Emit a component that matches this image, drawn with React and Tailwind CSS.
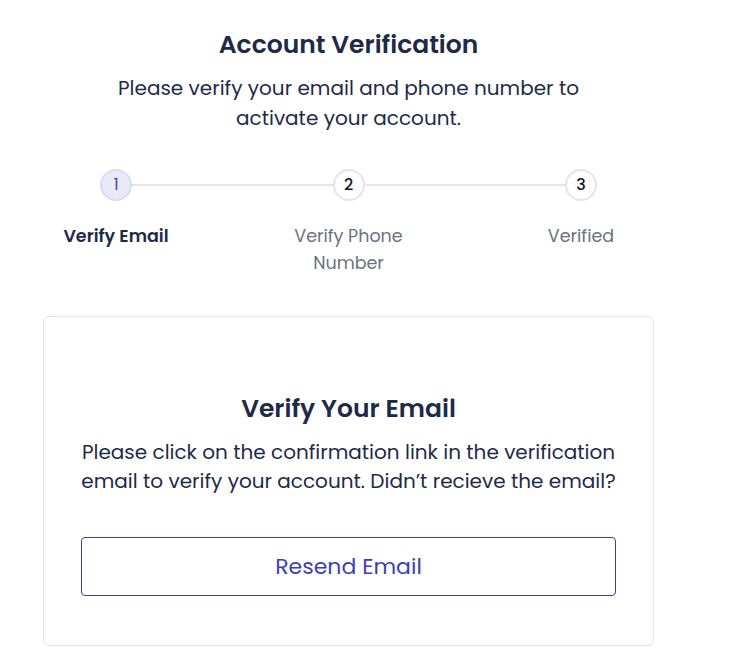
import React from 'react';

const steps = [
    { n: '1', label: 'Verify Email', active: true },
    { n: '2', label: 'Verify Phone Number' },
    { n: '3', label: 'Verified' },
];

const StepCircle = ({ step }) => (
    <div
        className={
            step.active
                ? 'w-8 h-8 rounded-full border-2 border-[#d9dcf2] bg-[#e9eaf8] flex items-center justify-center text-[16px] text-[#3f45b5]'
                : 'w-8 h-8 rounded-full border-2 border-[#e3e5ea] bg-white flex items-center justify-center text-[16px] font-medium text-[#111827]'
        }
    >
        {step.n}
    </div>
);

const App = () => {
    return (
        <div className="min-h-screen bg-white" style={{ fontFamily: '"Poppins", "Open Sans", sans-serif' }}>
            <div className="w-[611px] ml-[43px] pt-[29px] text-center">
                <h1 className="text-[25px] leading-[32px] font-semibold text-[#1e2a47]">Account Verification</h1>
                <p className="mt-[12px] text-[20px] leading-[30px] text-[#1e2a47] px-[50px]">
                    Please verify your email and phone number to activate your account.
                </p>

                {/* stepper */}
                <div className="mt-[36px] flex items-center px-[57px]">
                    <StepCircle step={steps[0]} />
                    <div className="flex-1 h-[2px] bg-[#e3e5ea]" />
                    <StepCircle step={steps[1]} />
                    <div className="flex-1 h-[2px] bg-[#e3e5ea]" />
                    <StepCircle step={steps[2]} />
                </div>
                <div className="mt-[22px] flex justify-between">
                    {steps.map((s) => (
                        <div
                            key={s.n}
                            className={
                                s.active
                                    ? 'w-[146px] text-[17.5px] leading-[27px] font-semibold text-[#1e2a47]'
                                    : 'w-[146px] text-[17.5px] leading-[27px] text-[#6b7280]'
                            }
                        >
                            {s.label}
                        </div>
                    ))}
                </div>

                {/* card */}
                <div className="mt-[39px] border border-[#e3e5ea] rounded-md px-[37px] pt-[76px] pb-[49px]">
                    <h2 className="text-[25px] leading-[32px] font-semibold text-[#1e2a47]">Verify Your Email</h2>
                    <p className="-mx-1 mt-[13px] text-[20px] leading-[29px] text-[#1e2a47]">
                        Please click on the confirmation link in the verification email to verify your account. Didn’t recieve the email?
                    </p>
                    <button className="mt-[41px] w-full h-[59px] border border-[#3c3f9a] rounded-[4px] text-[22px] text-[#3b3fb3] bg-white">
                        Resend Email
                    </button>
                </div>
            </div>
        </div>
    );
};

export default App;
